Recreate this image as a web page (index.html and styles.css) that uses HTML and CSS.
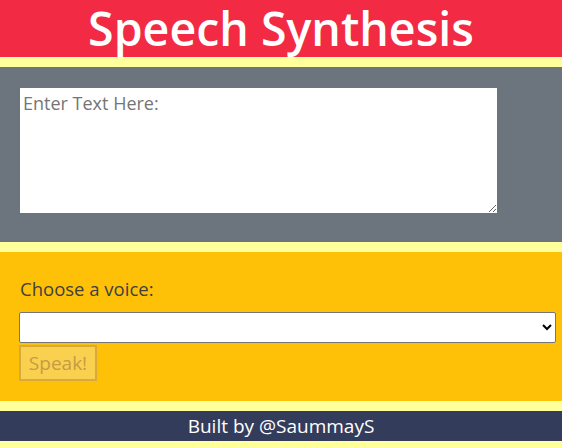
FILE: index.html
```html
<!DOCTYPE html>
<html>
<head>
<meta charset="utf-8">
<link rel="stylesheet" href="styles.css">
</head>
<body>
<header class="title-bar"><h1 class="title">Speech Synthesis</h1></header>
<section class="text-section">
  <textarea class="text-input" placeholder="Enter Text Here:"></textarea>
</section>
<section class="voice-section">
  <label class="voice-label">Choose a voice:</label>
  <select class="voice-select"></select>
  <button class="speak-btn" disabled>Speak!</button>
</section>
<footer class="footer">Built by @SaummayS</footer>
</body>
</html>
```
FILE: styles.css
```css
html, body {
  margin: 0;
  padding: 0;
  background: #ffff9c;
  font-family: "Open Sans", "Noto Sans", sans-serif;
}
.title-bar {
  background: #f22a44;
  height: 57px;
  display: flex;
  justify-content: center;
  align-items: flex-start;
  margin-bottom: 10px;
}
.title {
  margin: 0;
  color: #fff;
  font-size: 46.5px;
  font-weight: 600;
  line-height: 57px;
  white-space: nowrap;
}
.text-section {
  background: #6c757d;
  height: 175px;
  box-sizing: border-box;
  padding: 21px 20px 0 20px;
  margin-bottom: 10px;
}
.text-input {
  display: block;
  width: 477px;
  height: 125px;
  box-sizing: border-box;
  border: none;
  margin: 0;
  padding: 3px 3px;
  font-family: "Open Sans", sans-serif;
  font-size: 18px;
  color: #333;
}
.text-input::placeholder {
  color: #757575;
}
.voice-section {
  background: #ffc107;
  height: 149px;
  box-sizing: border-box;
  padding: 23px 6px 0 19px;
  margin-bottom: 10px;
  display: flex;
  flex-direction: column;
  align-items: flex-start;
}
.voice-label {
  font-size: 18.5px;
  color: #3f3f3f;
  line-height: 27px;
  margin-bottom: 10px;
  padding-left: 1px;
}
.voice-select {
  width: 100%;
  height: 31px;
  box-sizing: border-box;
  background: #fff;
  border: 1px solid #767676;
  border-radius: 2px;
  margin: 0 0 2px 0;
}
.speak-btn {
  height: 36px;
  width: 78px;
  box-sizing: border-box;
  background: #fad04f;
  border: 2px solid #d6aa3c;
  color: #c49c45;
  font-family: "Open Sans", sans-serif;
  font-size: 19px;
  padding: 0;
}
.footer {
  background: #343c5b;
  color: #fff;
  height: 30px;
  line-height: 30px;
  text-align: center;
  font-size: 19px;
}
```
